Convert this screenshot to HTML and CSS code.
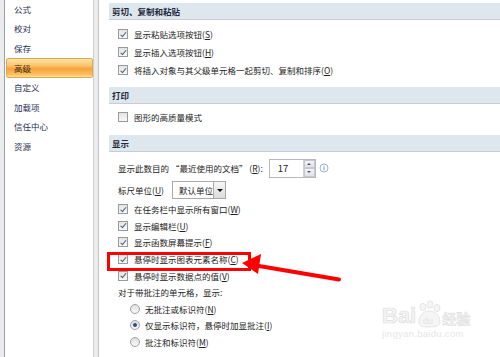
FILE: index.html
```html
<!DOCTYPE html>
<html lang="zh-CN">
<head>
    <meta charset="UTF-8">
    <meta name="viewport" content="width=device-width, initial-scale=1.0">
    <title>Excel 选项 - 高级</title>
    <link rel="stylesheet" href="styles.css">
</head>
<body>
    <div class="dialog">
        <ul class="nav">
            <li>公式</li>
            <li>校对</li>
            <li>保存</li>
            <li class="active">高级</li>
            <li>自定义</li>
            <li>加载项</li>
            <li>信任中心</li>
            <li>资源</li>
        </ul>

        <div class="main">
            <div class="band first">剪切、复制和粘贴</div>
            <div class="group g-paste">
                <div class="row"><span class="cb on"></span>显示粘贴选项按钮(<u>S</u>)</div>
                <div class="row"><span class="cb on"></span>显示插入选项按钮(<u>H</u>)</div>
                <div class="row"><span class="cb on"></span>将插入对象与其父级单元格一起剪切、复制和排序(<u>O</u>)</div>
            </div>

            <div class="band">打印</div>
            <div class="group g-print">
                <div class="row"><span class="cb"></span>图形的高质量模式</div>
            </div>

            <div class="band">显示</div>
            <div class="group g-show">
                <div class="row tall">
                    <span class="label">显示此数目的 “最近使用的文档” (<u>R</u>):</span>
                    <span class="spin">
                        <span class="spin-val">17</span>
                        <span class="spin-btns">
                            <span class="sb up"></span>
                            <span class="sb down"></span>
                        </span>
                    </span>
                    <svg class="info" width="10" height="10" viewBox="0 0 10 10">
                        <circle cx="5" cy="5" r="4" fill="#fff" stroke="#8fa9d8" stroke-width="0.9"/>
                        <rect x="4.5" y="4.2" width="1" height="3" fill="#6f8fcf"/>
                        <rect x="4.5" y="2.6" width="1" height="1" fill="#6f8fcf"/>
                    </svg>
                </div>
                <div class="row tall">
                    <span class="label">标尺单位(<u>U</u>)</span>
                    <span class="select">
                        <span class="select-val">默认单位</span>
                        <span class="select-btn"></span>
                    </span>
                </div>
                <div class="row"><span class="cb on"></span>在任务栏中显示所有窗口(<u>W</u>)</div>
                <div class="row"><span class="cb on"></span>显示编辑栏(<u>U</u>)</div>
                <div class="row"><span class="cb on"></span>显示函数屏幕提示(<u>F</u>)</div>
                <div class="row"><span class="cb on"></span>悬停时显示图表元素名称(<u>C</u>)</div>
                <div class="row"><span class="cb on"></span>悬停时显示数据点的值(<u>V</u>)</div>
                <div class="row plain">对于带批注的单元格，显示:</div>
                <div class="row radio-row"><span class="rd"></span>无批注或标识符(<u>N</u>)</div>
                <div class="row radio-row"><span class="rd on"></span>仅显示标识符，悬停时加显批注(<u>I</u>)</div>
                <div class="row radio-row"><span class="rd"></span>批注和标识符(<u>M</u>)</div>
            </div>
        </div>
    </div>

    <!-- annotation over the screenshot -->
    <div class="mark"></div>
    <svg class="arrow" width="500" height="357" viewBox="0 0 500 357">
        <line x1="256" y1="265.5" x2="339" y2="279.5" stroke="#ff0000" stroke-width="4" stroke-linecap="round"/>
        <polygon points="242,263 261,254 258,274" fill="#ff0000"/>
    </svg>

    <div class="watermark">
        <div class="wm-top">
            <span class="wm-bai">Bai</span>
            <svg width="26" height="28" viewBox="0 0 26 28">
                <g fill="#f5f5f5" stroke="#e0e0e0" stroke-width="0.8">
                    <ellipse cx="7" cy="7" rx="3" ry="3.6"/>
                    <ellipse cx="14" cy="4.5" rx="3" ry="3.6"/>
                    <ellipse cx="21" cy="8" rx="3" ry="3.6"/>
                    <path d="M3 22 C3 14 9 11 13 11 C18 11 24 14 24 22 C24 26 20 27 13 27 C6 27 3 26 3 22 Z"/>
                </g>
                <text x="7" y="24" font-size="9" fill="#e4e4e4" font-family="Liberation Sans, sans-serif">du</text>
            </svg>
            <span class="wm-jy">经验</span>
        </div>
        <div class="wm-url">jingyan.baidu.com</div>
    </div>
</body>
</html>
```

FILE: styles.css
```css
body {
    margin: 0;
    width: 500px;
    height: 357px;
    overflow: hidden;
    background-color: #ececec;
    font-family: "Noto Sans CJK SC", "Liberation Sans", sans-serif;
    font-size: 8.5px;
    color: #222;
    position: relative;
}
u {
    text-decoration: underline;
    text-underline-offset: 1px;
}
.dialog {
    display: flex;
    height: 357px;
    padding-left: 4px;
}

/* left category list */
.nav {
    width: 88px;
    margin: 0;
    padding: 0;
    list-style: none;
    background-color: #fff;
    border-left: 1px solid #98a1b3;
    border-right: 1px solid #cfcfcf;
}
.nav li {
    height: 19.5px;
    line-height: 19.5px;
    padding-left: 9px;
    color: #1f2f56;
}
.nav li:first-child {
    margin-top: -0.5px;
}
.nav li.active {
    margin-left: 1px;
    padding-left: 7px;
    box-sizing: border-box;
    height: 20px;
    line-height: 18px;
    border: 1px solid #e0a850;
    border-radius: 2px;
    background: linear-gradient(#fde4a6 0%, #fbc66f 35%, #f8a23c 55%, #fbbf5f 85%, #fde0a0 100%);
    color: #3a2a10;
}

/* right options pane */
.main {
    flex: 1;
    margin-left: 4px;
    padding-left: 10px;
    background-color: #fff;
    border-left: 1px solid #c4c4c4;
}
.band {
    height: 16px;
    line-height: 16px;
    padding-left: 3px;
    background-color: #dee6ee;
    border-bottom: 1px solid #c9cdd3;
    font-weight: bold;
    color: #1e2a3c;
}
.band.first {
    margin-top: 3px;
}
.group {
    padding-left: 9px;
}
.g-paste {
    padding-top: 5px;
    padding-bottom: 8px;
}
.g-print {
    padding-top: 4px;
    padding-bottom: 9px;
}
.g-show {
    padding-top: 5px;
}
.row {
    display: flex;
    align-items: center;
    height: 18px;
    white-space: nowrap;
}
.g-show .row {
    height: 16.6px;
}
.g-show .row.tall {
    height: 22px;
}
.row.radio-row {
    padding-left: 12px;
}

/* checkbox */
.cb {
    position: relative;
    width: 8px;
    height: 8px;
    margin-right: 6px;
    border: 1px solid #9a9a9a;
    background: linear-gradient(#e4e4e4, #f8f8f8);
    flex: none;
}
.cb.on::after {
    content: "";
    position: absolute;
    left: 2.5px;
    top: 0.5px;
    width: 2px;
    height: 4.5px;
    border-right: 1.4px solid #4b5a78;
    border-bottom: 1.4px solid #4b5a78;
    transform: rotate(40deg);
}

/* radio */
.rd {
    position: relative;
    width: 8px;
    height: 8px;
    margin-right: 5px;
    border: 1px solid #a0a0a0;
    border-radius: 50%;
    background: linear-gradient(#dedede, #f9f9f9);
    flex: none;
}
.rd.on::after {
    content: "";
    position: absolute;
    left: 2px;
    top: 2px;
    width: 4px;
    height: 4px;
    border-radius: 50%;
    background: #2a4c8c;
}

/* spinner */
.spin {
    display: flex;
    margin-left: 6px;
    width: 45px;
    height: 17px;
    border: 1px solid #b5b8bf;
    background-color: #fff;
}
.spin-val {
    flex: 1;
    padding-left: 8px;
    line-height: 17px;
    font-size: 9.5px;
}
.spin-btns {
    display: flex;
    flex-direction: column;
    width: 11px;
    border-left: 1px solid #d0d0d0;
}
.sb {
    position: relative;
    flex: 1;
    background: linear-gradient(#f4f4f4, #e2e2e2);
    border: 1px solid #c8c8c8;
}
.sb::after {
    content: "";
    position: absolute;
    left: 2.5px;
    top: 2px;
    border-left: 2.5px solid transparent;
    border-right: 2.5px solid transparent;
}
.sb.up::after {
    border-bottom: 2.5px solid #3b5998;
}
.sb.down::after {
    border-top: 2.5px solid #3b5998;
}
.info {
    margin-left: 3px;
}

/* dropdown */
.select {
    display: flex;
    margin-left: 8px;
    width: 52px;
    height: 16px;
    border: 1px solid #a9a9a9;
    background-color: #fff;
}
.select-val {
    flex: 1;
    padding-left: 6px;
    line-height: 16px;
}
.select-btn {
    position: relative;
    width: 12px;
    border-left: 1px solid #a9a9a9;
    background: linear-gradient(#f6f6f6, #dcdcdc);
}
.select-btn::after {
    content: "";
    position: absolute;
    left: 3px;
    top: 7px;
    border-left: 3px solid transparent;
    border-right: 3px solid transparent;
    border-top: 3px solid #111;
}

/* red annotation */
.mark {
    position: absolute;
    left: 107px;
    top: 252px;
    width: 138px;
    height: 13px;
    border: 3.5px solid #f00;
}
.arrow {
    position: absolute;
    left: 0;
    top: 0;
}

/* faint watermark */
.watermark {
    position: absolute;
    left: 382px;
    top: 300px;
    color: #f4f4f4;
}
.wm-top {
    display: flex;
    align-items: flex-end;
}
.wm-bai {
    font-family: "Liberation Sans", sans-serif;
    font-size: 22px;
    font-weight: bold;
    line-height: 24px;
    -webkit-text-stroke: 0.7px #dedede;
}
.wm-jy {
    font-size: 14px;
    line-height: 20px;
    font-weight: bold;
    -webkit-text-stroke: 0.6px #dedede;
}
.wm-url {
    font-family: "Liberation Sans", sans-serif;
    font-size: 9.5px;
    color: #e6e6e6;
    letter-spacing: 0.3px;
}
```
